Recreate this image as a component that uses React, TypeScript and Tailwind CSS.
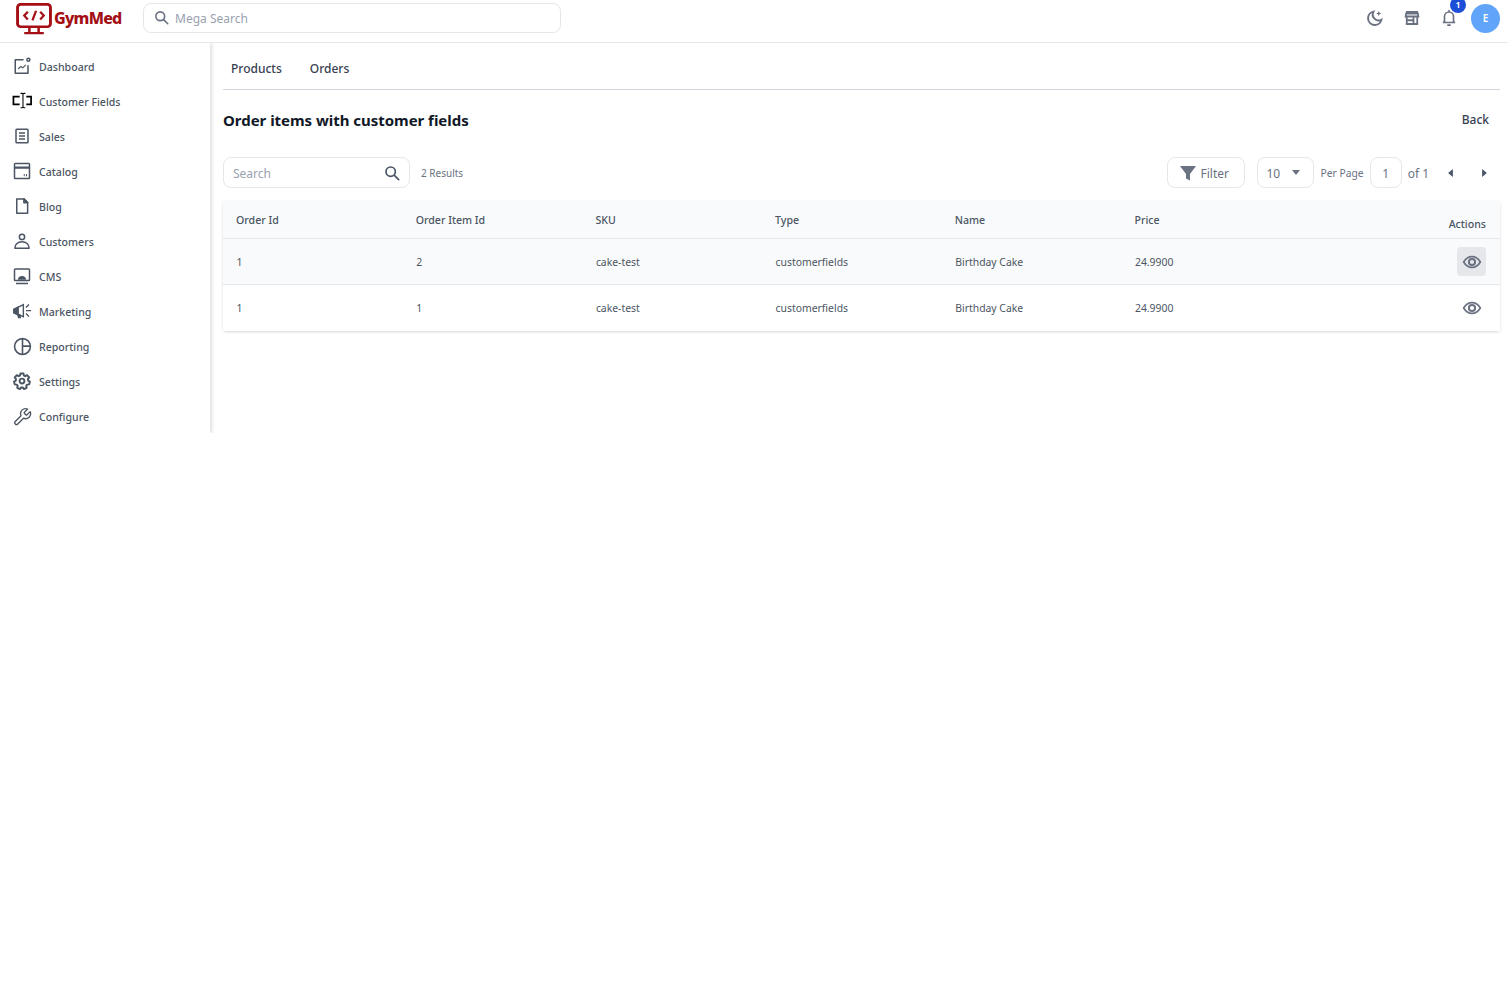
import React from "react";

const stroke = { fill: "none", stroke: "currentColor", strokeWidth: 2, strokeLinejoin: "round" as const };

const Ic = ({ children, cls = "w-[18px] h-[18px]" }: { children: React.ReactNode; cls?: string }) => (
  <svg viewBox="0 0 24 24" className={cls} {...stroke}>{children}</svg>
);

const nav: [string, React.ReactNode][] = [
  ["Dashboard", <Ic><path d="M14 3.500H3v18h17V11" /><path d="M7 16l3.500-3.500 2.500 2 4-4" strokeWidth="1.500" /><circle cx="20.500" cy="3.500" r="2" /></Ic>],
  ["Customer Fields", <svg viewBox="0 0 22 18" className="w-[21px] h-[18px] text-black" fill="none" stroke="currentColor" strokeWidth="1.800"><path d="M8 4.500H1.500v8H8" /><path d="M15 4.500h5v8h-5" /><path d="M9 1h1.500a1 1 0 0 1 1 1v13a1 1 0 0 1-1 1H9M14 1h-1.500a1 1 0 0 0-1 1v13a1 1 0 0 0 1 1H14" strokeWidth="1.100" /></svg>],
  ["Sales", <Ic><rect x="4" y="3" width="16" height="18" rx="1" /><path d="M8 8h8M8 12h8M8 16h8" /></Ic>],
  ["Catalog", <Ic><rect x="2" y="2" width="20" height="20" rx="1" /><path d="M2 7.500h20" strokeWidth="3" /><path d="M15 19v-3M18 19v-3" strokeWidth="1.300" /></Ic>],
  ["Blog", <Ic><path d="M5 2.500h9.500l5 5v14H5z" /><path d="M14.500 2.500v5h5z" fill="currentColor" /></Ic>],
  ["Customers", <Ic><circle cx="12" cy="6.500" r="3.500" /><path d="M2.500 21.500c0-5 4-8.500 9.500-8.500s9.500 3.500 9.500 8.500z" /></Ic>],
  ["CMS", <Ic><rect x="2" y="2.500" width="20" height="15.500" rx="1" /><path d="M6.500 17c0-3 2.300-5 5.500-5s5.500 2 5.500 5z" fill="currentColor" stroke="none" /><path d="M4 22h16" /></Ic>],
  ["Marketing", <svg viewBox="0 0 22 18" className="w-[19px] h-[16px]" fill="none" stroke="currentColor" strokeWidth="1.600"><path d="M1 7l11-5.500v14L1 11z" /><path d="M1 7l5-2.500v9L1 11z" fill="currentColor" /><path d="M5 12l1.500 4.500h2L7.500 12.500" fill="currentColor" /><path d="M15 5l3.500-3.500M15 8.500h6M15 12l3.500 3.500" /></svg>],
  ["Reporting", <Ic cls="w-[19px] h-[19px]"><circle cx="12" cy="12" r="10" /><path d="M12 2v20M12 11.500h10" /></Ic>],
  ["Settings", <Ic><path d="M10 2h4l.6 2.800 1.700.8 2.500-1.400 2.700 3-1.600 2.300.3 1.900 2.300 1.300-.9 3.800-2.700.3-1.200 1.500.5 2.700-3.500 1.700-1.800-2h-1.900l-1.800 2-3.500-1.700.5-2.700-1.200-1.500-2.700-.3-.9-3.800 2.300-1.300.3-1.900-1.600-2.300 2.700-3 2.500 1.400 1.700-.8z" strokeWidth="2.600" /><circle cx="12" cy="12" r="3.200" strokeWidth="2.600" /></Ic>],
  ["Configure", <Ic cls="w-[20px] h-[20px]"><path d="M15 7.500a1 1 0 0 0 0 1.400l1.600 1.600a1 1 0 0 0 1.400 0l3.770-3.770a6 6 0 0 1-7.940 7.940l-6.910 6.910a2.120 2.120 0 0 1-3-3l6.910-6.910a6 6 0 0 1 7.940-7.940z" strokeWidth="1.600" /></Ic>],
];

const cols = ["Order Id", "Order Item Id", "SKU", "Type", "Name", "Price"];
const rows = [["1", "2", "cake-test", "customerfields", "Birthday Cake", "24.9900"], ["1", "1", "cake-test", "customerfields", "Birthday Cake", "24.9900"]];

const Eye = () => (
  <svg viewBox="0 0 24 24" className="w-[20px] h-[20px] text-gray-500" fill="none" stroke="currentColor" strokeWidth="2"><path d="M2 12c2.500-4.300 6-6.500 10-6.500s7.500 2.200 10 6.500c-2.500 4.300-6 6.500-10 6.500S4.500 16.300 2 12z" /><circle cx="12" cy="12" r="3.700" strokeWidth="2.400" /></svg>
);

const Search = ({ cls }: { cls: string }) => (
  <svg viewBox="0 0 24 24" className={cls} fill="none" stroke="currentColor" strokeWidth="2.600" strokeLinecap="round"><circle cx="10" cy="10" r="7" /><path d="M15.500 15.500L22 22" /></svg>
);

export default function App() {
  return (
    <div className="bg-white min-h-[1000px] font-['Noto_Sans','Open_Sans',sans-serif] text-[#374151]">
      <header className="h-[43px] border-b border-gray-200 flex items-center pb-[6px]">
        <div className="w-[143px] pl-[16px] flex items-center shrink-0">
          <svg viewBox="0 0 35 33" preserveAspectRatio="none" className="w-[36px] h-[32px] mt-[1px] text-[#a30f14]">
            <rect x="1.500" y="1.500" width="32" height="23" rx="3" fill="none" stroke="currentColor" strokeWidth="2.800" />
            <path d="M11.500 9l-3.500 4 3.500 4M23.500 9l3.500 4-3.500 4M19.500 8l-3.500 10" fill="none" stroke="currentColor" strokeWidth="2.200" />
            <path d="M13 25v5M22 25v5M8 31h19" fill="none" stroke="currentColor" strokeWidth="2.400" />
          </svg>
          <span className="ml-[2px] text-[16px] font-extrabold tracking-[-0.75px] text-[#a30f14]">GymMed</span>
        </div>
        <div className="w-[418px] h-[30px] border border-gray-200 rounded-lg flex items-center pl-[10px] gap-[6px]">
          <Search cls="w-[15px] h-[15px] text-gray-500 -mt-[2px]" />
          <span className="text-[12px] text-gray-400 mt-[1px]">Mega Search</span>
        </div>
        <div className="ml-auto flex items-center text-gray-500">
          <svg viewBox="0 0 24 24" className="w-[18px] h-[18px]" fill="none" stroke="currentColor" strokeWidth="2.600"><path d="M10 3.500a9 9 0 1 0 10.500 11A8 8 0 0 1 10 3.500z" /><path d="M17 2.500l1 2.500 2.500 1-2.500 1-1 2.500-1-2.500-2.500-1 2.500-1z" fill="currentColor" stroke="none" /></svg>
          <svg viewBox="0 0 24 24" className="w-[18px] h-[18px] ml-[19px]" fill="none" stroke="currentColor" strokeWidth="2.400"><path d="M4 4h16M3.500 10l.7-4h15.600l.7 4zM5 10v10h14V10M5 15h9M14 10v10" /></svg>
          <div className="relative ml-[19px]">
            <svg viewBox="0 0 24 24" className="w-[18px] h-[18px]" fill="none" stroke="currentColor" strokeWidth="2.200" strokeLinecap="round"><path d="M6 17V10a6 6 0 0 1 12 0v7l2 1H4zM12 2v2M10.500 21.500h3" /></svg>
            <span className="absolute -top-[12px] -right-[8px] w-[16px] h-[16px] rounded-full bg-[#1d4ed8] text-white text-[8px] font-bold flex items-center justify-center">1</span>
          </div>
          <div className="ml-[13px] mr-[8px] w-[29px] h-[29px] rounded-full bg-[#60a5fa] text-white text-[10px] font-semibold flex items-center justify-center">E</div>
        </div>
      </header>
      <div className="flex items-start">
        <aside className="w-[210px] h-[390px] shrink-0 shadow-[2px_0_4px_rgba(0,0,0,0.13)] [clip-path:inset(0_-10px_0_0)] pt-[6px]">
          {nav.map(([label, icon]) => (
            <div key={label} className="h-[35px] flex items-center text-[#4b5563]">
              <div className="w-[39px] pl-[11px] pr-[6px] flex justify-center shrink-0 -mt-[1px]">{icon}</div>
              <span className="text-[10.600px] font-medium whitespace-nowrap mt-[2px]">{label}</span>
            </div>
          ))}
        </aside>
        <main className="flex-1 pl-[13px] pr-[8px]">
          <div className="h-[47px] border-b border-gray-300 flex items-center pl-[8px] pt-[6px] gap-[28px] text-[12px] font-medium text-[#374151]">
            <span>Products</span>
            <span>Orders</span>
          </div>
          <div className="flex items-center justify-between h-[61px] pr-[11px]">
            <h1 className="text-[15px] font-bold text-[#111827] tracking-[-0.03px]">Order items with customer fields</h1>
            <span className="text-[12px] font-medium -mt-[1px]">Back</span>
          </div>
          <div className="flex items-center h-[32px] mt-[5px]">
            <div className="w-[187px] h-[31px] border border-gray-200 rounded-lg flex items-center justify-between pl-[9px] pr-[9px]">
              <span className="text-[12px] text-gray-400 mt-[3px]">Search</span>
              <Search cls="w-[16px] h-[16px] text-gray-600 mt-[1px]" />
            </div>
            <span className="ml-[11px] text-[10px] text-gray-500 mt-[3px]">2 Results</span>
            <div className="ml-auto flex items-center pr-[13px]">
              <div className="w-[78px] h-[31px] border border-gray-200 rounded-lg flex items-center pl-[12px] gap-[5px]">
                <svg viewBox="0 0 16 16" className="w-[16px] h-[16px] text-gray-500 mt-[2px]" fill="currentColor"><path d="M0 1h16L10 9v6.500l-4-2V9z" /></svg>
                <span className="text-[12px] text-gray-500 mt-[3px]">Filter</span>
              </div>
              <div className="ml-[12px] w-[57px] h-[31px] border border-gray-200 rounded-lg flex items-center pl-[9px] text-[12px] text-gray-500">
                <span className="mt-[3px]">10</span>
                <svg viewBox="0 0 10 6" className="w-[8px] h-[5px] ml-[12px] text-gray-500" fill="currentColor"><path d="M0 0h10L5 6z" /></svg>
              </div>
              <span className="ml-[7px] text-[10.300px] text-gray-500 mt-[3px]">Per Page</span>
              <div className="ml-[6px] w-[32px] h-[31px] border border-gray-200 rounded-lg flex items-center justify-center text-[12px] text-gray-500 pt-[3px]">1</div>
              <span className="ml-[6px] text-[12px] text-gray-500 mt-[3px]">of 1</span>
              <svg viewBox="0 0 6 10" className="w-[5px] h-[8px] ml-[19px] mt-[1px] text-gray-600" fill="currentColor"><path d="M6 0v10L0 5z" /></svg>
              <svg viewBox="0 0 6 10" className="w-[5px] h-[8px] ml-[29px] mt-[1px] text-gray-600" fill="currentColor"><path d="M0 0v10l6-5z" /></svg>
            </div>
          </div>
          <div className="mt-[13px] rounded-[3px] shadow-[0_1px_3px_rgba(0,0,0,0.16)]">
            <div className="h-[38px] bg-[#f9fafb] border-b border-gray-200 flex items-center pl-[13px] pr-[13px] text-[10.600px] font-medium text-[#4b5563]">
              {cols.map((c) => <span key={c} className="w-[179.700px] shrink-0 mt-[2px]">{c}</span>)}
              <span className="ml-auto mt-[10px] mr-[1px]">Actions</span>
            </div>
            {rows.map((r, i) => (
              <div key={i} className={"h-[46px] flex items-center pl-[13.500px] pr-[14px] text-[10.400px] text-[#4b5563] " + (i === 0 ? "bg-[#f9fafb] border-b border-gray-200 pt-[1px]" : "bg-white")}>
                {r.map((c, j) => <span key={j} className="w-[179.700px] shrink-0 mt-[2px]">{c}</span>)}
                <span className={"ml-auto w-[29px] h-[29px] rounded flex items-center justify-center -mt-[1px] " + (i === 0 ? "bg-gray-200" : "")}><Eye /></span>
              </div>
            ))}
          </div>
        </main>
      </div>
    </div>
  );
}
